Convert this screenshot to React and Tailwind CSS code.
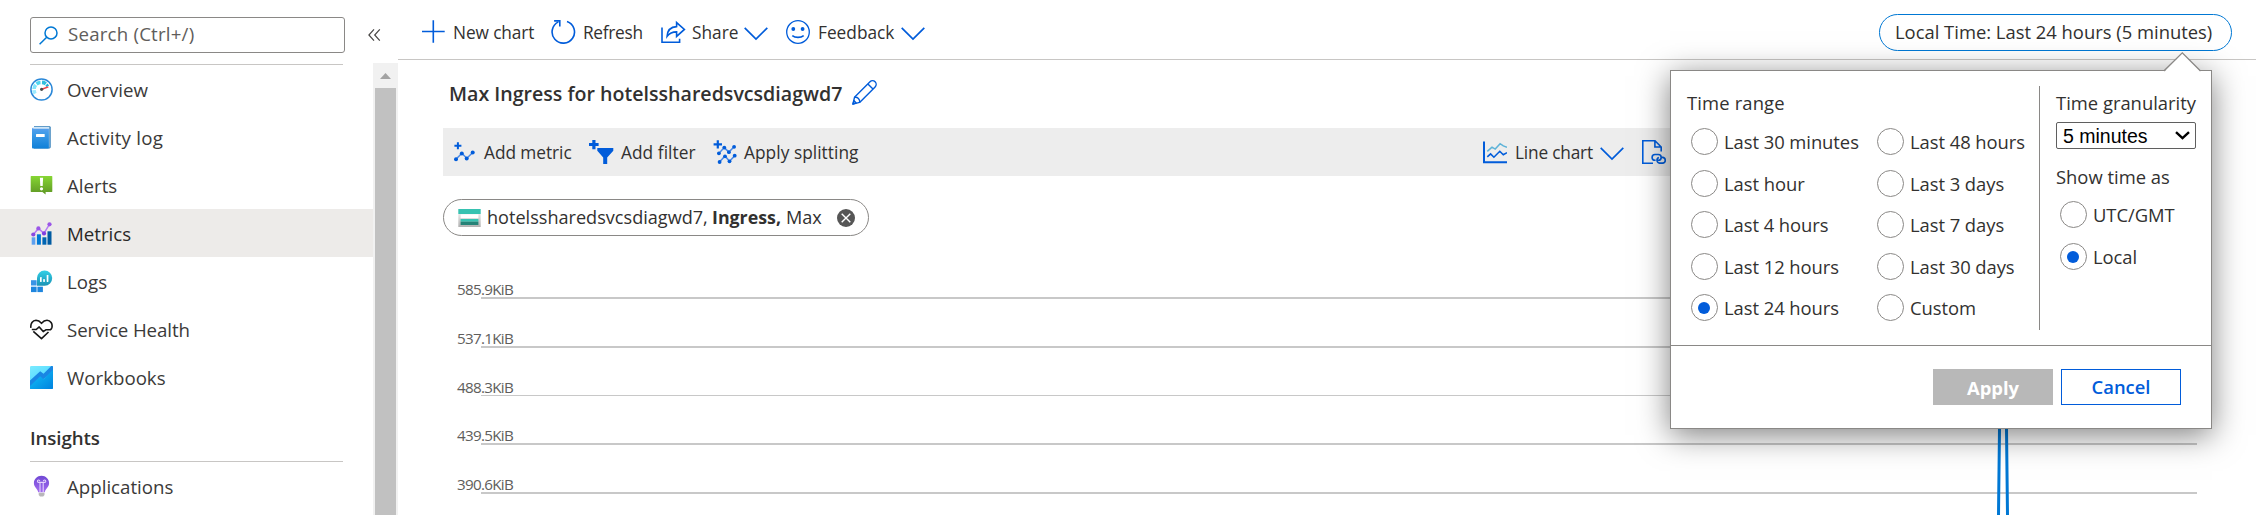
import React from 'react';

const BLUE = '#015cda';

/* ---------- sidebar icons ---------- */

const OverviewIcon = () => (
  <svg width="23" height="23" viewBox="0 0 23 23">
    <circle cx="11.5" cy="11.5" r="10.6" fill="#fff" stroke="#2b88d8" strokeWidth="1.5" />
    <g fill="none" strokeWidth="3.6">
      <path d="M5.1 15.6A7 7 0 0 1 4 12.2" stroke="#9cebff" />
      <path d="M4.1 11A7 7 0 0 1 5.7 6.9" stroke="#83e5fb" />
      <path d="M6.6 6A7 7 0 0 1 10.5 4.5" stroke="#50d5f0" />
      <path d="M12 4.4A7 7 0 0 1 15.8 5.9" stroke="#32bedd" />
    </g>
    <path d="M16.4 6.6A7 7 0 0 1 17.7 8.4" fill="none" stroke="#1fb3d6" strokeWidth="3" />
    <path d="M11.6 10.6 18 8.3l.6 1.3-6.5 2.3z" fill="#f04049" />
    <circle cx="11.6" cy="11.3" r="1.6" fill="#4a4a4a" />
  </svg>
);

const ActivityLogIcon = () => (
  <svg width="23" height="23" viewBox="0 0 23 23">
    <defs>
      <linearGradient id="act" x1="0" y1="0" x2="0" y2="1">
        <stop offset="0" stopColor="#5ea0ef" />
        <stop offset=".3" stopColor="#3f9be8" />
        <stop offset="1" stopColor="#0f80d8" />
      </linearGradient>
    </defs>
    <path d="M4 .3h15.4c.7 0 1.3.5 1.3 1.200V21c0 .8-.6 1.400-1.300 1.400H4z" fill="#2f7cb8" />
    <path d="M4 1h15.400v20.600H4z" fill="#cfe6f7" />
    <path d="M3.200 1.800C2.500 1.800 2 2.400 2 3v18.300c0 .8.500 1.300 1.200 1.300h14.500c.7 0 1.200-.5 1.200-1.200V2.700H3.800c-.6 0-.6-.9.200-1.700z" fill="url(#act)" />
    <rect x="6" y="8" width="8.700" height="3.100" rx=".5" fill="#fff" />
  </svg>
);

const AlertsIcon = () => (
  <svg width="23" height="23" viewBox="0 0 23 23">
    <defs>
      <linearGradient id="alr" x1="0" y1="0" x2="0" y2="1">
        <stop offset="0" stopColor="#86d633" />
        <stop offset="1" stopColor="#5e9624" />
      </linearGradient>
    </defs>
    <path d="M1.200 2h20.600c.3 0 .5.2.500.500v15c0 .3-.2.500-.5.500h-6.200v2.600L12.400 18H1.200c-.3 0-.5-.2-.5-.5v-15c0-.3.200-.5.500-.5z" fill="url(#alr)" />
    <path d="M9.900 3.800h3.200l-.4 8.200h-2.400z" fill="#fff" />
    <circle cx="11.500" cy="14.800" r="1.600" fill="#fff" />
  </svg>
);

const MetricsIcon = () => (
  <svg width="23" height="23" viewBox="0 0 23 23">
    <rect x="1.700" y="15.300" width="3.600" height="7.400" fill="#5ea0ef" />
    <rect x="6.900" y="12.300" width="4" height="10.400" fill="#0078d4" />
    <rect x="12.400" y="15.300" width="4" height="7.400" fill="#0065b3" />
    <rect x="17.500" y="9.300" width="4" height="13.400" fill="#005ba1" />
    <path d="M3.200 12.700 8.400 6.400l5.500 5L19.600 2.200" fill="none" stroke="#b77af4" strokeWidth="1.500" />
    <circle cx="3.300" cy="12.500" r="2.100" fill="#8a48e0" />
    <circle cx="8.400" cy="6.400" r="2.100" fill="#9b56e8" />
    <circle cx="14" cy="11.400" r="2.100" fill="#7f3fe0" />
    <circle cx="19.500" cy="2.300" r="2.100" fill="#9b56e8" />
  </svg>
);

const LogsIcon = () => (
  <svg width="23" height="23" viewBox="0 0 23 23">
    <defs>
      <linearGradient id="lg" x1="0" y1="0" x2="0" y2="1">
        <stop offset="0" stopColor="#32d0e6" />
        <stop offset="1" stopColor="#1b93b6" />
      </linearGradient>
    </defs>
    <g fill="#3a94e6">
      <rect x="1" y="10.200" width="5.600" height="5.300" />
      <rect x="1" y="16.700" width="5.600" height="5.400" fill="#1f86de" />
      <rect x="7.400" y="16.700" width="5.500" height="5.400" fill="#1f86de" />
    </g>
    <path d="M7 15.700V8.100A7.600 7.600 0 1 1 14.700 15.700z" fill="url(#lg)" />
    <rect x="10" y="7" width="1.700" height="5" rx=".4" fill="#fff" />
    <rect x="13.200" y="9" width="1.700" height="3" rx=".4" fill="#fff" />
    <rect x="16.700" y="5" width="1.700" height="7" rx=".4" fill="#fff" />
  </svg>
);

const HealthIcon = () => (
  <svg width="23" height="23" viewBox="0 0 23 23" fill="none" stroke="#161616" strokeWidth="1.600" strokeLinejoin="round">
    <path d="M.9 9.800C.3 5.700 2.600 2.400 6 2.300c2.400 0 3.900 1.100 5.500 3 1.600-1.900 3.100-3 5.500-3 3.500 0 5.800 3.500 4.900 7.200-.3 1-.9 1.800-1.400 2.300h-4.700l-2.600 1.800-4-4.700-3 2.600H1.800" />
    <path d="M3.300 13.300l8.200 7.400 7-6.700" />
  </svg>
);

const WorkbooksIcon = () => (
  <svg width="23" height="23" viewBox="0 0 23 23">
    <defs>
      <linearGradient id="wb1" x1="0" y1="0" x2=".6" y2="1">
        <stop offset="0" stopColor="#7cebff" />
        <stop offset="1" stopColor="#3fd2ff" />
      </linearGradient>
      <linearGradient id="wb2" x1="0" y1="0" x2="1" y2="1">
        <stop offset="0" stopColor="#14c4f8" />
        <stop offset="1" stopColor="#0082df" />
      </linearGradient>
    </defs>
    <rect width="23" height="23" rx="1.200" fill="url(#wb1)" />
    <path d="M0 14.500 10.200 5.300l3.300 2.500L21.300 0H22c.6 0 1 .4 1 1v5L0 23z" fill="#1a86e3" />
    <path d="M0 20 10.200 10.300l3.300 3L23 3.800V22c0 .6-.4 1-1 1H1c-.6 0-1-.4-1-1z" fill="url(#wb2)" />
  </svg>
);

const AppInsightsIcon = () => (
  <svg width="23" height="23" viewBox="0 0 23 23">
    <defs>
      <linearGradient id="ai" x1="0" y1="0" x2="0" y2="1">
        <stop offset="0" stopColor="#7048d4" />
        <stop offset="1" stopColor="#a36cf0" />
      </linearGradient>
    </defs>
    <path d="M11.500.8c-4.300 0-7.600 3.300-7.600 7.300 0 4.400 3.500 5.200 4.300 9.200h6.600c.8-4 4.300-4.800 4.300-9.200 0-4-3.300-7.300-7.600-7.300z" fill="url(#ai)" />
    <path d="M10 17V7.200M13.200 17V7.200M10 7.400H8.600a1.200 1.200 0 1 1 1.200-1.300M13.200 7.400h1.500a1.200 1.200 0 1 0-1.300-1.300M10 7.400h3.200" fill="none" stroke="#e3d3fb" strokeWidth="1.100" />
    <path d="M8.700 17.700h5.800v2.200l-1.300 1.600h-3.200l-1.300-1.600z" fill="#b8b6ba" />
  </svg>
);

/* ---------- line icons ---------- */

const SearchIcon = () => (
  <svg width="19" height="19" viewBox="0 0 19 19" fill="none" stroke="#0078d4" strokeWidth="1.500">
    <circle cx="12" cy="6.900" r="6" />
    <path d="M7.700 11.200.6 18.300" />
  </svg>
);

const Chevron = () => (
  <svg width="24" height="14" viewBox="0 0 24 14" fill="none" stroke={BLUE} strokeWidth="1.700">
    <path d="M.7 .900 12 12.100 23.300.900" />
  </svg>
);

const PlusIcon = () => (
  <svg width="23" height="24" viewBox="0 0 23 24" stroke={BLUE} strokeWidth="1.600">
    <path d="M0 11.500h22.700M11.300.2v22.600" />
  </svg>
);

const RefreshIcon = () => (
  <svg width="25" height="24" viewBox="0 0 25 24" fill="none" stroke={BLUE} strokeWidth="1.600">
    <path d="M7.400 1.900a11.200 11.200 0 1 0 8.600-.5" />
    <path d="M3.100 .900h5.700v5.700" />
  </svg>
);

const ShareIcon = () => (
  <svg width="25" height="24" viewBox="0 0 25 24" fill="none" stroke={BLUE} strokeWidth="1.600">
    <path d="M1 7.500v14.800h17.600v-3.500" />
    <path d="M15.600 2.600v4C9.500 6.900 6.400 10.600 6.100 16.300c2.400-3.200 5.200-4.400 9.500-4.400v4.500l7.800-7z" />
  </svg>
);

const SmileIcon = () => (
  <svg width="24" height="24" viewBox="0 0 24 24" fill="none" stroke={BLUE} strokeWidth="1.300">
    <circle cx="12" cy="12" r="11.300" />
    <circle cx="7.300" cy="9" r="1.900" fill={BLUE} stroke="none" />
    <circle cx="16.600" cy="9" r="1.900" fill={BLUE} stroke="none" />
    <path d="M6.300 15.700c3 2.300 8.400 2.300 11.400 0" strokeWidth="1.700" />
  </svg>
);

const PencilIcon = () => (
  <svg width="25" height="25" viewBox="0 0 25 25" fill="none" stroke={BLUE} strokeWidth="1.400" strokeLinejoin="round">
    <path d="M.9 24.100 2.500 17.300 18 1.800a3.500 3.500 0 0 1 5.100 5.100L7.600 22.400z" />
    <path d="M2.500 17.300a4.300 4.300 0 0 1 5.100 5.100M15.900 4 21 9.100M.9 24.100l1.200-3.400 2.100 2.200z" />
  </svg>
);

const AddMetricIcon = () => (
  <svg width="21" height="21" viewBox="0 0 21 21">
    <path d="M3.900.3v7M.4 3.800h7" stroke={BLUE} strokeWidth="2" />
    <path d="M2 17.300 7.800 11.300l5 5 6.200-6" fill="none" stroke="#4b8ae6" strokeWidth="1.500" />
    <g fill={BLUE}>
      <circle cx="2" cy="17.300" r="2" />
      <circle cx="7.800" cy="11.500" r="2" />
      <circle cx="12.700" cy="16.500" r="2" />
      <circle cx="18.700" cy="10.500" r="2" />
    </g>
  </svg>
);

const AddFilterIcon = () => (
  <svg width="25" height="24" viewBox="0 0 25 24" fill={BLUE}>
    <path d="M3.300 0h3.200v3.100h3.100v3H6.500v3.200H3.300V6.100H0v-3h3.300z" />
    <path d="M8.300 8h16v2.700L18.200 17.400V24h-4v-6.600L8.300 10.700z" />
  </svg>
);

const SplitIcon = () => (
  <svg width="24" height="25" viewBox="0 0 24 25">
    <path d="M4.800.3v8.200M.6 4.400h8.400" stroke={BLUE} strokeWidth="2.200" />
    <g fill="none" stroke="#4b8ae6" strokeWidth="1.500">
      <path d="m5.700 13.500 5.600-5.900 4.600 4.500 5.200-5.400M6.500 22l5.500-6 4.500 5.300 5.200-5.600" />
    </g>
    <g fill={BLUE}>
      <circle cx="5.900" cy="13.300" r="1.900" />
      <circle cx="11.300" cy="7.600" r="1.900" />
      <circle cx="15.900" cy="12.200" r="1.900" />
      <circle cx="21.100" cy="6.800" r="1.900" />
      <circle cx="6.600" cy="22" r="1.900" />
      <circle cx="12" cy="16.300" r="1.900" />
      <circle cx="16.500" cy="21.300" r="1.900" />
      <circle cx="21.700" cy="15.700" r="1.900" />
    </g>
  </svg>
);

const LineChartIcon = () => (
  <svg width="24" height="23" viewBox="0 0 24 23" fill="none">
    <path d="M1 0.500v20.700h23" stroke={BLUE} strokeWidth="2" />
    <path d="m4.300 10.400 4.700-4.300 3.200 2 4.900-5.400 3.200 2.200 3.700 1.300" stroke="#5db3d8" strokeWidth="1.500" />
    <path d="m4.300 15.900 3.300-3 3.300 3.300 5.900-5.900 3.500 3.400 3.700-2" stroke={BLUE} strokeWidth="1.600" />
  </svg>
);

const FileLinkIcon = () => (
  <svg width="25" height="24" viewBox="0 0 25 24" fill="none" stroke={BLUE} strokeWidth="1.600">
    <path d="M11 23.200H.8V.8H13l6.200 6.200v4.500M12.900.8v6.200h6.300" />
    <path d="M13.600 20.300h-.6a2.900 2.900 0 0 1 0-5.800h3.300a2.900 2.900 0 0 1 0 5.800h-.5M19.700 17.400h1.200a2.900 2.900 0 0 1 0 5.700h-3.400a2.900 2.900 0 0 1-.6-5.600" />
  </svg>
);

const StorageIcon = () => (
  <svg width="23" height="18" viewBox="0 0 23 18">
    <defs>
      <linearGradient id="st" x1="0" y1="0" x2="0" y2="1">
        <stop offset="0" stopColor="#e8e8e8" />
        <stop offset="1" stopColor="#b0b0b0" />
      </linearGradient>
    </defs>
    <rect x=".3" width="22.400" height="5" fill="#37c2b1" />
    <rect x=".3" y="5" width="22.400" height="13" fill="url(#st)" />
    <rect x="2.600" y="5.300" width="17.800" height="3.900" fill="#fff" />
    <rect x="2.600" y="10" width="17.800" height="2.700" fill="#37c2b1" />
    <rect x="2.600" y="12.700" width="17.800" height="3.300" fill="#258277" />
  </svg>
);

const RemoveIcon = () => (
  <svg width="18" height="18" viewBox="0 0 18 18">
    <circle cx="9" cy="9" r="9" fill="#565656" />
    <path d="m4.700 4.700 8.600 8.600m0-8.600-8.600 8.600" stroke="#fff" strokeWidth="1.400" />
  </svg>
);

/* ---------- sidebar ---------- */

const MENU = [
  { label: 'Overview', icon: OverviewIcon, cls: '' },
  { label: 'Activity log', icon: ActivityLogIcon, cls: 'tracking-[0.25px]' },
  { label: 'Alerts', icon: AlertsIcon, cls: '' },
  { label: 'Metrics', icon: MetricsIcon, cls: '', active: true },
  { label: 'Logs', icon: LogsIcon, cls: '' },
  { label: 'Service Health', icon: HealthIcon, cls: 'tracking-[-0.100px]' },
  { label: 'Workbooks', icon: WorkbooksIcon, cls: '' },
];

function MenuItem({ label, icon: Icon, active, cls }) {
  return (
    <li className={`flex h-[48px] items-center gap-[14px] pt-px pl-[30px] ${active ? 'bg-[#edebe9] text-[#292827]' : 'text-[#3b3a39]'}`}>
      <Icon />
      <span className={`mt-px ${cls}`}>{label}</span>
    </li>
  );
}

function Sidebar() {
  return (
    <aside className="flex w-[398px] shrink-0 flex-col text-[18.700px] leading-[26px]">
      <div className="flex h-[63px] shrink-0 pt-[17px] pl-[30px]">
        <div className="flex h-[36px] w-[315px] items-center gap-[10px] rounded-[3px] border border-[#8a8886] pl-[8px] text-[#5f5d5b]">
          <SearchIcon />
          <span className="-mt-[2px] tracking-[0.200px]">Search (Ctrl+/)</span>
        </div>
        <svg className="mt-[12px] ml-[23px]" width="13" height="12" viewBox="0 0 13 12" fill="none" stroke="#484644" strokeWidth="1.200">
          <path d="M6 .4.900 6 6 11.600M11.800.4 6.700 6l5.100 5.600" />
        </svg>
      </div>
      <div className="flex min-h-0 flex-1">
        <nav className="w-[373px] overflow-hidden pt-px">
          <div className="ml-[30px] h-px w-[313px] bg-[#c8c6c4]" />
          <ul>
            {MENU.map((m) => (
              <MenuItem key={m.label} {...m} />
            ))}
          </ul>
          <h2 className="ml-[30px] h-[60px] w-[313px] pt-[24px] font-semibold tracking-[-0.100px] text-[#323130]">Insights</h2>
          <div className="ml-[30px] h-px w-[313px] bg-[#c8c6c4]" />
          <ul>
            <MenuItem label="Applications" icon={AppInsightsIcon} cls="" />
          </ul>
        </nav>
        <div className="flex w-[25px] flex-col items-center bg-[#f1f1f1]">
          <svg className="mt-[10px] mb-[9px]" width="11" height="6" viewBox="0 0 11 6">
            <path d="M0 6 5.500 0 11 6z" fill="#a3a3a3" />
          </svg>
          <div className="w-[21px] flex-1 bg-[#c1c1c1]" />
        </div>
      </div>
    </aside>
  );
}

/* ---------- main area ---------- */

function CommandBar() {
  return (
    <header className="flex h-[60px] shrink-0 items-center border-b border-[#c8c6c4] pt-[4px] pl-[24px] text-[17.300px] leading-[24px] whitespace-nowrap text-[#323130]">
      <button className="flex w-[129px] items-center gap-[8px]">
        <PlusIcon />
        <span className="mt-[2px] tracking-[-0.100px]">New chart</span>
      </button>
      <button className="flex w-[110px] items-center gap-[7px]">
        <RefreshIcon />
        <span className="mt-[2px] tracking-[-0.300px]">Refresh</span>
      </button>
      <button className="flex w-[125px] items-center">
        <ShareIcon />
        <span className="mt-[2px] ml-[6px] w-[52px] text-left">Share</span>
        <span className="mt-[5px]"><Chevron /></span>
      </button>
      <button className="flex items-center">
        <SmileIcon />
        <span className="mt-[2px] ml-[8px] w-[83px] text-left">Feedback</span>
        <span className="mt-[5px]"><Chevron /></span>
      </button>
      <button className="mt-[2px] mr-[24px] ml-auto flex h-[37px] w-[353px] items-center rounded-full border border-[#0078d4] bg-white pb-px pl-[15px] text-[18.400px]">
        Local Time: Last 24 hours (5 minutes)
      </button>
    </header>
  );
}

function ChartToolbar() {
  return (
    <div className="mt-[24px] flex h-[48px] w-[1756px] items-center bg-[#ededed] pl-[11px] text-[17.300px] leading-[24px] whitespace-nowrap text-[#323130]">
      <button className="flex w-[135px] items-center gap-[9px]">
        <AddMetricIcon />
        <span className="mt-px tracking-[-0.050px]">Add metric</span>
      </button>
      <button className="flex w-[124px] items-center gap-[7px]">
        <AddFilterIcon />
        <span className="mt-px tracking-[0.050px]">Add filter</span>
      </button>
      <button className="flex w-[770px] items-center gap-[7px]">
        <SplitIcon />
        <span className="mt-px tracking-[0.050px]">Apply splitting</span>
      </button>
      <button className="flex w-[159px] items-center">
        <LineChartIcon />
        <span className="mt-px ml-[8px] w-[85px] text-left tracking-[-0.200px]">Line chart</span>
        <span className="mt-[3px]"><Chevron /></span>
      </button>
      <FileLinkIcon />
    </div>
  );
}

const TICKS = [
  { label: '585.9KiB', y: 62, h: 2 },
  { label: '537.1KiB', y: 111, h: 2 },
  { label: '488.3KiB', y: 160, h: 1 },
  { label: '439.5KiB', y: 208, h: 2 },
  { label: '390.6KiB', y: 257, h: 2 },
];

function Chart() {
  return (
    <svg className="block" width="1790" height="279" viewBox="0 0 1790 279">
      {TICKS.map((t) => (
        <g key={t.label}>
          <rect x="38" y={t.y - 1} width="1716" height={t.h} fill="#c8c8c8" />
          <text x="14" y={t.y - 3} className="fill-[#605e5c] text-[15.200px] tracking-[-0.700px]">{t.label}</text>
        </g>
      ))}
      <path d="M1555.500 279 1556.500 193 1560 90 1563.500 193 1564.500 279" fill="none" stroke="#0078d4" strokeWidth="3" />
    </svg>
  );
}

function Main() {
  return (
    <main className="flex min-w-0 flex-1 flex-col">
      <CommandBar />
      <section className="flex flex-col pl-[45px]">
        <div className="mt-[20px] flex h-[24px] items-center gap-[10px] pl-[6px]">
          <h1 className="mt-[3px] text-[19.600px] leading-[24px] font-semibold whitespace-nowrap text-[#323130]">
            Max Ingress for hotelssharedsvcsdiagwd7
          </h1>
          <PencilIcon />
        </div>
        <ChartToolbar />
        <div className="mt-[23px] flex h-[37px] w-[426px] items-center rounded-full border border-[#8a8886] bg-white pl-[14px] text-[18.100px] leading-[24px] whitespace-nowrap text-[#323130]">
          <StorageIcon />
          <span className="-mt-px ml-[6px] w-[225px]">hotelssharedsvcsdiagwd7,</span>
          <span className="-mt-px w-[74px] text-[17.800px] font-bold">Ingress,</span>
          <span className="-mt-px w-[51px]">Max</span>
          <RemoveIcon />
        </div>
        <Chart />
      </section>
    </main>
  );
}

/* ---------- time range callout ---------- */

function Radio({ label, checked }) {
  return (
    <label className="flex h-[27px] items-center gap-[6px] whitespace-nowrap">
      <span className="flex size-[27px] shrink-0 items-center justify-center rounded-full border border-[#8a8886] bg-white pr-px">
        {checked && <span className="size-[12px] rounded-full bg-[#015cda]" />}
      </span>
      <span className="mt-[1px] tracking-[-0.050px]">{label}</span>
    </label>
  );
}

const LEFT = ['Last 30 minutes', 'Last hour', 'Last 4 hours', 'Last 12 hours', 'Last 24 hours'];
const RIGHT = ['Last 48 hours', 'Last 3 days', 'Last 7 days', 'Last 30 days', 'Custom'];

function TimeCallout() {
  return (
    <div className="absolute top-[70px] left-[1670px] flex h-[359px] w-[542px] flex-col border border-[#8a8886] bg-white text-[18.400px] leading-[24px] text-[#323130] shadow-[0_6px_30px_rgba(0,0,0,0.500)]">
      <svg className="absolute -top-[19px] left-[492px]" width="38" height="20" viewBox="0 0 38 20">
        <path d="M1 20 19.300 1.500 38 20z" fill="#fff" />
        <path d="M.8 19 19.300.9 37.500 19" fill="none" stroke="#8a8886" strokeWidth="1.300" />
      </svg>
      <div className="flex h-[275px] border-b border-[#8a8886] pt-[15px] pl-[16px]">
        <div className="h-[244px] w-[353px] border-r border-[#8a8886]">
          <div className="mt-[5px] h-[37px] tracking-[0.150px]">Time range</div>
          <div className="flex pl-[4px]">
            <div className="flex h-[193px] w-[186px] flex-col justify-between">
              {LEFT.map((l, i) => (
                <Radio key={l} label={l} checked={i === 4} />
              ))}
            </div>
            <div className="flex h-[193px] flex-col justify-between">
              {RIGHT.map((l) => (
                <Radio key={l} label={l} />
              ))}
            </div>
          </div>
        </div>
        <div className="pl-[16px] whitespace-nowrap">
          <div className="mt-[5px] h-[31px]">Time granularity</div>
          <div className="flex h-[27px] w-[140px] items-center justify-between rounded-[2px] border border-[#5f5f5f] bg-white pr-[5px] pl-[6px] font-['Liberation_Sans',sans-serif] text-[19.500px] text-black">
            <span>5 minutes</span>
            <svg width="15" height="9" viewBox="0 0 15 9" fill="none" stroke="#000" strokeWidth="2.400">
              <path d="m1 1.200 6.500 6 6.500-6" />
            </svg>
          </div>
          <div className="mt-[16px] h-[36px]">Show time as</div>
          <div className="flex h-[69px] flex-col justify-between pl-[4px]">
            <Radio label="UTC/GMT" />
            <Radio label="Local" checked />
          </div>
        </div>
      </div>
      <div className="flex gap-[8px] pt-[23px] pl-[262px] font-semibold">
        <button className="h-[36px] w-[120px] bg-[#b8b8b8] pt-px font-bold text-white">Apply</button>
        <button className="h-[36px] w-[120px] border border-[#015cda] bg-white text-[#015cda]">Cancel</button>
      </div>
    </div>
  );
}

export default function App() {
  return (
    <div className="relative flex h-[515px] w-[2256px] overflow-hidden bg-white font-['Open_Sans','Noto_Sans',sans-serif]">
      <Sidebar />
      <Main />
      <TimeCallout />
    </div>
  );
}
